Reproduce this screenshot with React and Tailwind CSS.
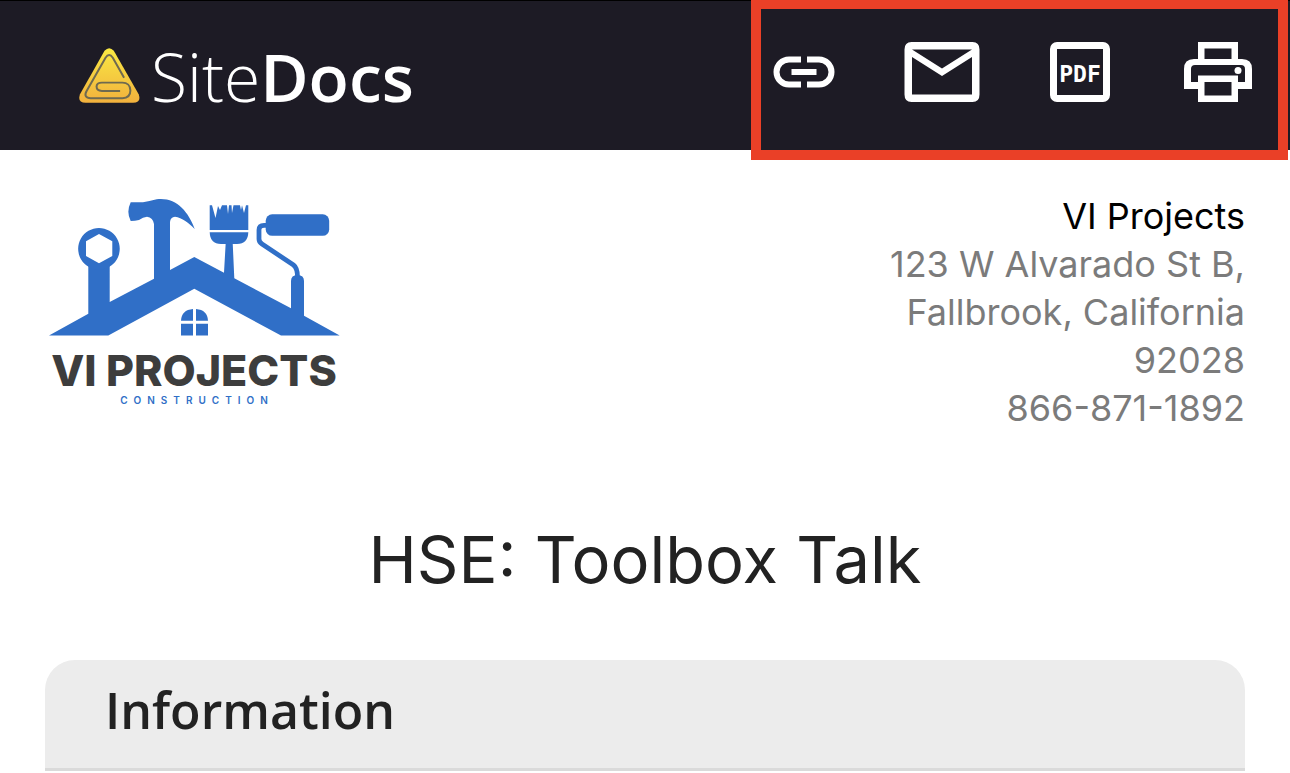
function BrandMark() {
  return (
    <svg viewBox="27 36 184 171" className="h-[57px] w-[61px]" aria-hidden="true">
      <defs>
        <linearGradient id="brand-fill" x1="0" y1="0" x2="0" y2="1">
          <stop offset="0" stopColor="#f9e943" />
          <stop offset="1" stopColor="#f2b13d" />
        </linearGradient>
      </defs>
      <path
        d="M104 47Q118 31 132 47L207 178Q216 204 190 204H47Q21 204 30 178Z"
        fill="url(#brand-fill)"
      />
      <path
        d="M163 128L129 68Q118 52 107 68L50 168C42 182 48 190 62 190H158C176 190 182 180 182 167C182 152 172 143 158 143H96C84 143 80 148 80 155C80 163 85 168 96 168H151"
        fill="none"
        stroke="#6f6a50"
        strokeWidth="6"
      />
    </svg>
  )
}

function LinkIcon() {
  return (
    <svg viewBox="0 0 80 60" className="h-[60px] w-20" fill="none" stroke="currentColor" strokeWidth="6">
      <path d="M37 17.500H25a12.500 12.500 0 0 0 0 25H37M43 17.500H55a12.500 12.500 0 0 1 0 25H43M27.500 30H52.500" />
    </svg>
  )
}

function MailIcon() {
  return (
    <svg viewBox="0 0 80 60" className="h-[60px] w-20" fill="currentColor">
      <path
        fillRule="evenodd"
        d="M9.500 0H70.500Q77.500 0 77.500 7.500V52.500Q77.500 60 70.500 60H9.500Q2.500 60 2.500 52.500V7.500Q2.500 0 9.500 0ZM10 15V52.500H70V15L40 34ZM10 7.500L40 26.500L70 7.500Z"
      />
    </svg>
  )
}

function PdfIcon() {
  return (
    <svg viewBox="0 0 80 60" className="h-[60px] w-20">
      <rect x="13.500" y="3.500" width="53" height="53" rx="3.500" fill="none" stroke="currentColor" strokeWidth="7" />
      <text
        x="40"
        y="40"
        textAnchor="middle"
        fill="currentColor"
        className="font-['DejaVu_Sans_Mono',monospace] text-[23px] font-bold"
      >
        PDF
      </text>
    </svg>
  )
}

function PrintIcon() {
  return (
    <svg viewBox="0 0 80 60" className="h-[60px] w-20" fill="currentColor">
      <path
        fillRule="evenodd"
        d="M20 0H60V17H64Q74 17 74 27V47H60V60H20V47H6V27Q6 17 16 17H20ZM26.500 6.500V17H53.500V6.500ZM13 40H20V33.500H60V40H67V27Q67 23 63 23H17Q13 23 13 27ZM26.500 40V53.500H53.500V40Z"
      />
      <circle cx="60" cy="28.500" r="3.500" />
    </svg>
  )
}

function CompanyLogo() {
  return (
    <div className="flex w-[292px] flex-col items-center">
      <svg viewBox="0 0 292 138" className="w-full" fill="#306fc7" aria-hidden="true">
        {/* roof with the wrench and hammer shafts */}
        <path d="M1 137.500L40.300 115.700V68H61.700V104L106 80.700V26Q105 19.500 99 18.700Q95 19 91 22Q87 23 82.700 23Q78 14 82.700 4.300H95Q101 3.500 108.700 1.300C128 -1 140 13 146.700 31C141 25 134 19.500 127 18.700Q122.500 19 122 24V72L146.300 59L176 74.700L177.700 45H184.700L186.300 80.300L243 110.300V83Q243 77 249.500 77Q256 77 256 83V117.700L291.700 137.500H233L146.300 90.700L60.300 137.500Z" />
        {/* wrench head */}
        <path
          fillRule="evenodd"
          d="M51 30A20.800 20.800 0 1 1 50.900 30ZM51 36L38 43.300V58L51 65.300L64.300 58V43.300Z"
        />
        {/* brush */}
        <path d="M161.700 7.300H164L167.500 20L170 8L172 12L174 7.300H179L180 16L181 7.300H183.500L184 15L185.500 7.300H192L193 12L194 7.300L196 15L198 7.300H200.300V32H161.700Z" />
        <path d="M161.700 34.300H200.300Q200 46 189 46H173Q162 46 161.700 34.300Z" />
        {/* paint roller */}
        <rect x="217.700" y="16.300" width="63.500" height="21.500" rx="6.500" />
        <path
          d="M218 27.300H216Q211 27.300 211 32V41Q211 44 214 46L245.500 67Q249.500 70 249.500 79"
          fill="none"
          stroke="#306fc7"
          strokeWidth="4.800"
        />
        {/* window */}
        <path d="M145 111V122.700H133Q133.500 112 145 111ZM148 111V122.700H160Q159.500 112 148 111ZM133 125.700H145V137.500H133ZM148 125.700H160V137.500H148Z" />
      </svg>
      <p className="mt-[10px] font-['Inter',sans-serif] text-[43px] leading-[48px] font-extrabold whitespace-nowrap text-[#3d3d3d]">
        VI PROJECTS
      </p>
      <p className="pl-1.5 font-['Inter',sans-serif] text-[10px] leading-3 font-semibold tracking-[6px] text-[#306fc7]">
        CONSTRUCTION
      </p>
    </div>
  )
}

const actions = [
  { label: "Copy link", Icon: LinkIcon },
  { label: "Email", Icon: MailIcon },
  { label: "Download PDF", Icon: PdfIcon },
  { label: "Print", Icon: PrintIcon },
]

function Header() {
  return (
    <header className="flex justify-between border-t border-black bg-[#1d1b25] text-white">
      <a href="#" className="flex items-center gap-[11px] pl-[79px] font-['Open_Sans',sans-serif]">
        <BrandMark />
        <span className="text-[66px] leading-[80px] font-light">
          Site<span className="font-semibold">Docs</span>
        </span>
      </a>
      <nav className="-mt-px mr-0.5 -mb-2.5 flex gap-[58px] border-[10px] border-t-[9px] border-[#ea4027] pt-[33px] pr-5 pb-12 pl-[3px]">
        {actions.map(({ label, Icon }) => (
          <button key={label} type="button" aria-label={label}>
            <Icon />
          </button>
        ))}
      </nav>
    </header>
  )
}

export default function App() {
  return (
    <div className="bg-white font-['Inter',sans-serif] text-[#222222]">
      <Header />
      <main className="px-[45px] pt-[42px]">
        <div className="flex items-start justify-between pl-[3px]">
          <div className="pt-1.5">
            <CompanyLogo />
          </div>
          <address className="text-right text-[36px] leading-[48px] text-[#7b7b7b] not-italic">
            <p className="text-black">VI Projects</p>
            <p>123 W Alvarado St B,</p>
            <p>Fallbrook, California</p>
            <p>92028</p>
            <p>866-871-1892</p>
          </address>
        </div>
        <h1 className="mt-[88px] text-center text-[65px] leading-[80px]">HSE: Toolbox Talk</h1>
        <section className="mt-[60px] rounded-t-[30px] border-b-[3px] border-[#dadada] bg-[#ececec] px-[60px] pt-5 pb-7">
          <h2 className="font-['Open_Sans',sans-serif] text-[50px] leading-[60px] font-semibold">Information</h2>
        </section>
      </main>
    </div>
  )
}
